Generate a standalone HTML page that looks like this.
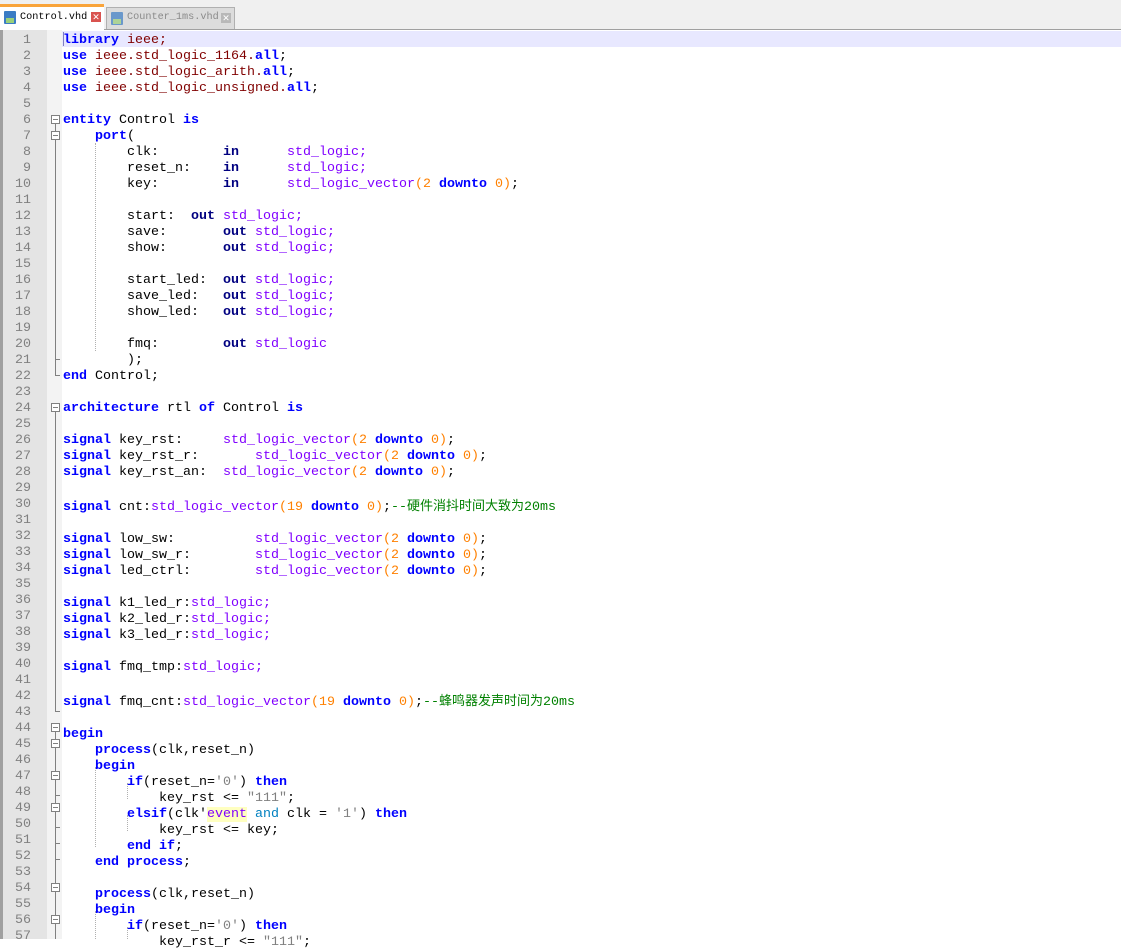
<!DOCTYPE html>
<html><head><meta charset="utf-8"><style>
body{margin:0;width:1121px;height:939px;overflow:hidden;background:#fff;font-family:"Liberation Mono","Noto Sans CJK SC",monospace;}
#tabs{position:absolute;left:0;top:0;width:1121px;height:29px;background:#f0f0f0;border-bottom:1px solid #a0a0a0;}
.tab{position:absolute;top:6px;height:22px;font-size:10.2px;line-height:22px;}
#t1{left:0;width:104px;background:#fff;border-top:3px solid #f9a43a;top:4px;height:25px;color:#000;}
#t2{left:106px;width:127px;background:#dcdcdc;border:1px solid #b0b0b0;border-bottom:none;color:#8a8a8a;top:7px;height:21px}
.ico{position:absolute;left:4px;top:4px;width:12px;height:13px;background:#3a7cc4;border-radius:1px}
.ico:after{content:"";position:absolute;left:2px;top:7px;width:8px;height:5px;background:#9ad07a}
.x{position:absolute;right:3px;top:5px;width:10px;height:10px;background:#d9534f;color:#fff;font-size:9px;line-height:10px;text-align:center;font-family:"Liberation Sans",sans-serif}
#t2 .x{background:#b8b8b8}
#gut{position:absolute;left:0;top:30px;width:47px;height:909px;background:#e4e4e4;border-left:3px solid #a0a0a0;box-sizing:border-box}
#fold{position:absolute;left:47px;top:30px;width:15px;height:909px;background:#f3f3f3}
#hl{position:absolute;left:62px;top:31px;width:1059px;height:16px;background:#e8e8ff}
#cur{position:absolute;left:63px;top:32px;width:1px;height:14px;background:#8080c0}
#nums{position:absolute;left:0;top:33px;width:31px;text-align:right;font-size:13.33px;line-height:16px;color:#808080;white-space:pre}
#code{position:absolute;left:63px;top:33px;font-size:13.33px;line-height:16px;color:#000;white-space:pre}
.k{color:#0000ff;font-weight:bold}.d{color:#000080;font-weight:bold}.t{color:#8000ff}.n{color:#ff8000}.s{color:#808080}.c{color:#008000}.l{color:#800000}.a{color:#0080c0}.e{color:#8000ff;background:#ffffc0}
.cj{font-family:"Noto Sans CJK SC",sans-serif;font-size:13px}
.fb{position:absolute;left:51px;width:9px;height:9px;border:1px solid #808080;background:#fff;box-sizing:border-box}
.fb:after{content:"";position:absolute;left:1px;top:3px;width:5px;height:1px;background:#808080}
.vl{position:absolute;left:55px;width:1px;background:#808080}
.tk{position:absolute;left:55px;width:5px;height:1px;background:#808080}
.ig{position:absolute;width:0;border-left:1px dotted #b0b0b0}
</style></head><body>
<div id="tabs">
<div class="tab" id="t1"><div class="ico"></div><span style="position:absolute;left:20px;top:0">Control.vhd</span><div class="x">✕</div></div>
<div class="tab" id="t2"><div class="ico" style="opacity:.7"></div><span style="position:absolute;left:20px;top:-1px">Counter_1ms.vhd</span><div class="x">✕</div></div>
</div>
<div id="gut"></div><div id="fold"></div><div id="hl"></div>
<div class="vl" style="top:124px;height:252px"></div>
<div class="fb" style="top:115px"></div><div class="fb" style="top:131px"></div>
<div class="tk" style="top:359px"></div><div class="tk" style="top:375px"></div>
<div class="vl" style="top:412px;height:300px"></div><div class="tk" style="top:711px"></div>
<div class="fb" style="top:403px"></div>
<div class="vl" style="top:732px;height:207px"></div>
<div class="fb" style="top:723px"></div><div class="fb" style="top:739px"></div>
<div class="fb" style="top:771px"></div><div class="tk" style="top:795px"></div>
<div class="fb" style="top:803px"></div><div class="tk" style="top:827px"></div>
<div class="tk" style="top:843px"></div><div class="tk" style="top:859px"></div>
<div class="fb" style="top:883px"></div><div class="fb" style="top:915px"></div>
<div class="ig" style="left:95px;top:143px;height:208px"></div>
<div class="ig" style="left:95px;top:767px;height:80px"></div>
<div class="ig" style="left:127px;top:783px;height:16px"></div>
<div class="ig" style="left:127px;top:815px;height:16px"></div>
<div class="ig" style="left:95px;top:911px;height:28px"></div>
<div class="ig" style="left:127px;top:927px;height:12px"></div>
<div id="nums">1
2
3
4
5
6
7
8
9
10
11
12
13
14
15
16
17
18
19
20
21
22
23
24
25
26
27
28
29
30
31
32
33
34
35
36
37
38
39
40
41
42
43
44
45
46
47
48
49
50
51
52
53
54
55
56
57</div>
<div id="cur"></div>
<div id="code"><span class="k">library</span> <span class="l">ieee;</span>
<span class="k">use</span> <span class="l">ieee.std_logic_1164.</span><span class="k">all</span>;
<span class="k">use</span> <span class="l">ieee.std_logic_arith.</span><span class="k">all</span>;
<span class="k">use</span> <span class="l">ieee.std_logic_unsigned.</span><span class="k">all</span>;

<span class="k">entity</span> Control <span class="k">is</span>
    <span class="k">port</span>(
        clk:        <span class="d">in</span>      <span class="t">std_logic;</span>
        reset_n:    <span class="d">in</span>      <span class="t">std_logic;</span>
        key:        <span class="d">in</span>      <span class="t">std_logic_vector</span><span class="n">(2</span> <span class="k">downto</span> <span class="n">0)</span>;

        start:  <span class="d">out</span> <span class="t">std_logic;</span>
        save:       <span class="d">out</span> <span class="t">std_logic;</span>
        show:       <span class="d">out</span> <span class="t">std_logic;</span>

        start_led:  <span class="d">out</span> <span class="t">std_logic;</span>
        save_led:   <span class="d">out</span> <span class="t">std_logic;</span>
        show_led:   <span class="d">out</span> <span class="t">std_logic;</span>

        fmq:        <span class="d">out</span> <span class="t">std_logic</span>
        );
<span class="k">end</span> Control;

<span class="k">architecture</span> rtl <span class="k">of</span> Control <span class="k">is</span>

<span class="k">signal</span> key_rst:     <span class="t">std_logic_vector</span><span class="n">(2</span> <span class="k">downto</span> <span class="n">0)</span>;
<span class="k">signal</span> key_rst_r:       <span class="t">std_logic_vector</span><span class="n">(2</span> <span class="k">downto</span> <span class="n">0)</span>;
<span class="k">signal</span> key_rst_an:  <span class="t">std_logic_vector</span><span class="n">(2</span> <span class="k">downto</span> <span class="n">0)</span>;

<span class="k">signal</span> cnt:<span class="t">std_logic_vector</span><span class="n">(19</span> <span class="k">downto</span> <span class="n">0)</span>;<span class="c">--<span class="cj">硬件消抖时间大致为</span>20ms</span>

<span class="k">signal</span> low_sw:          <span class="t">std_logic_vector</span><span class="n">(2</span> <span class="k">downto</span> <span class="n">0)</span>;
<span class="k">signal</span> low_sw_r:        <span class="t">std_logic_vector</span><span class="n">(2</span> <span class="k">downto</span> <span class="n">0)</span>;
<span class="k">signal</span> led_ctrl:        <span class="t">std_logic_vector</span><span class="n">(2</span> <span class="k">downto</span> <span class="n">0)</span>;

<span class="k">signal</span> k1_led_r:<span class="t">std_logic;</span>
<span class="k">signal</span> k2_led_r:<span class="t">std_logic;</span>
<span class="k">signal</span> k3_led_r:<span class="t">std_logic;</span>

<span class="k">signal</span> fmq_tmp:<span class="t">std_logic;</span>

<span class="k">signal</span> fmq_cnt:<span class="t">std_logic_vector</span><span class="n">(19</span> <span class="k">downto</span> <span class="n">0)</span>;<span class="c">--<span class="cj">蜂鸣器发声时间为</span>20ms</span>

<span class="k">begin</span>
    <span class="k">process</span>(clk,reset_n)
    <span class="k">begin</span>
        <span class="k">if</span>(reset_n=<span class="s">'0'</span>) <span class="k">then</span>
            key_rst &lt;= <span class="s">"111"</span>;
        <span class="k">elsif</span>(clk'<span class="e">event</span> <span class="a">and</span> clk = <span class="s">'1'</span>) <span class="k">then</span>
            key_rst &lt;= key;
        <span class="k">end</span> <span class="k">if</span>;
    <span class="k">end</span> <span class="k">process</span>;

    <span class="k">process</span>(clk,reset_n)
    <span class="k">begin</span>
        <span class="k">if</span>(reset_n=<span class="s">'0'</span>) <span class="k">then</span>
            key_rst_r &lt;= <span class="s">"111"</span>;</div>
</body></html>
